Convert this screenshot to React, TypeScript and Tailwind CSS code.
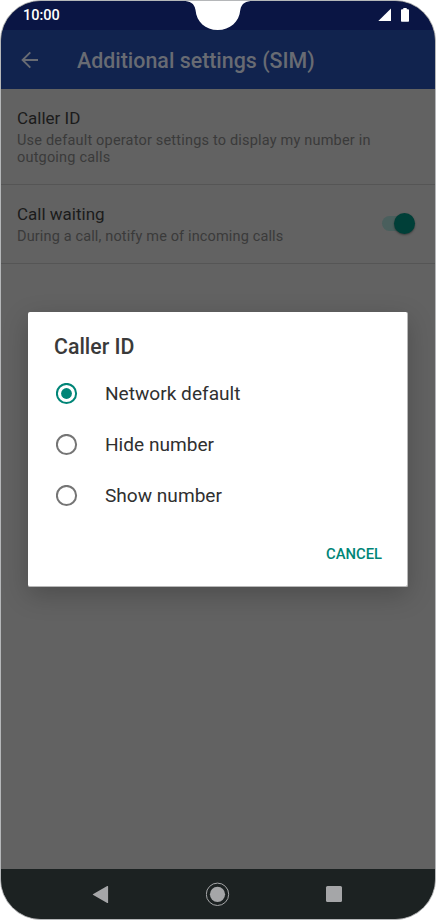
import { useState } from "react";

const options = ["Network default", "Hide number", "Show number"];

const StatusBar = () => (
  <div className="relative h-[29px] bg-[#0a1544] flex justify-between pl-[22px] pr-[26px]">
    <span className="text-[14.5px] leading-[30px] font-medium text-white">10:00</span>
    <div className="flex items-start gap-[10px] pt-[7px]">
      <svg width="13" height="14" viewBox="0 0 13 14" fill="#fff">
        <path d="M13 0.5V13H0.3z" />
      </svg>
      <svg width="8" height="14" viewBox="0 0 8 14" fill="#fff">
        <path d="M2.3 0h3.4v1.3H7a1 1 0 0 1 1 1V13a.8.8 0 0 1-.8.8H.8A.8.8 0 0 1 0 13V2.3a1 1 0 0 1 1-1h1.3z" />
      </svg>
    </div>
    {/* camera notch */}
    <svg className="absolute left-[182px] -top-px" width="70" height="31" viewBox="0 0 70 31" fill="#fff">
      <path d="M0 0H70V1C63 1 58.5 3 57.3 10C56.3 22 47 30 34.7 30S13.5 22 12.5 10C11.3 3 7 1 0 1z" />
    </svg>
  </div>
);

const NavBar = () => (
  <div className="h-[50px] bg-[#1c2222] flex items-center pl-[91px]">
    <svg width="18" height="18" viewBox="0 0 18 18" fill="#a5a6a8">
      <path d="M1.3 8.9 15.2 1.1q.9-.5.9.5v15.8q0 1-.9.5L1.3 10.1q-1-.6 0-1.2z" />
    </svg>
    <svg className="ml-[96px]" width="24" height="24" viewBox="0 0 24 24">
      <circle cx="11.5" cy="12.3" r="11.2" fill="none" stroke="#a5a6a8" strokeWidth="1" />
      <circle cx="11.5" cy="12.3" r="7.6" fill="#a5a6a8" />
    </svg>
    <div className="w-[16px] h-[16px] ml-[96px] rounded-[1.5px] bg-[#a5a6a8]" />
  </div>
);

const App = () => {
  const [selected, setSelected] = useState(options[0]);

  return (
    <div className="relative w-[436px] h-[920px] bg-white font-['Roboto',sans-serif]">
      <div className="w-full h-full rounded-[41px] border border-[#b5b7b9] overflow-hidden flex flex-col bg-[#626262]">
        <StatusBar />

        <header className="h-[59px] shrink-0 bg-[#11234e] flex items-center pl-[20px] text-[#686b73]">
          <svg width="18" height="18" viewBox="0 0 18 18" fill="none" stroke="currentColor" strokeWidth="1.9">
            <path d="M17 9H2M9.3 1.3 1.6 9l7.7 7.7" />
          </svg>
          <h1 className="ml-[38px] mt-[3px] text-[21.4px] font-medium whitespace-nowrap">Additional settings (SIM)</h1>
        </header>

        <main className="flex-1">
          <div className="h-[96px] border-b border-[#555] pl-[16px] pt-[18px]">
            <h2 className="text-[17px] leading-[22px] text-[#1b1b1b]">Caller ID</h2>
            <p className="mt-[3px] w-[370px] text-[14.5px] tracking-[0.19px] leading-[17px] text-[#3a3a3a]">
              Use default operator settings to display my number in outgoing calls
            </p>
          </div>
          <div className="h-[79px] border-b border-[#555] pl-[16px] pr-[20px] flex justify-between items-center">
            <div>
              <h2 className="text-[17px] leading-[22px] text-[#1b1b1b]">Call waiting</h2>
              <p className="mt-[3px] text-[14.5px] tracking-[0.14px] leading-[17px] text-[#3a3a3a]">During a call, notify me of incoming calls</p>
            </div>
            <div className="w-[33px] h-[15px] mb-[2px] rounded-full bg-[#4a5f5d] flex items-center justify-end">
              <span className="w-[21px] h-[21px] shrink-0 rounded-full bg-[#003f38] shadow-[0_1px_2px_rgba(0,0,0,0.4)]" />
            </div>
          </div>
        </main>

        <NavBar />
      </div>

      <div
        role="dialog"
        className="absolute left-[28px] top-[312px] w-[380px] h-[275px] rounded-[2px] bg-white border-r border-b border-[#b8b8b8] shadow-[0_8px_26px_rgba(0,0,0,0.22)] pl-[26px] pr-[25px] pt-[21px] flex flex-col"
      >
        <h2 className="text-[21.3px] leading-[28px] font-medium text-[#3a3a3a]">Caller ID</h2>
        <div className="mt-[7px]">
          {options.map(option => (
            <div key={option} onClick={() => setSelected(option)} className="h-[51px] flex items-center cursor-pointer">
              <svg className="ml-[2px]" width="22" height="22" viewBox="0 0 22 22">
                <circle cx="10.5" cy="10.5" r="9.6" fill="none" stroke={option === selected ? "#008577" : "#757575"} strokeWidth="2" />
                {option === selected && <circle cx="10.5" cy="10.5" r="5.4" fill="#008577" />}
              </svg>
              <span className="ml-[27px] mt-[2px] text-[19.1px] text-[#303030]">{option}</span>
            </div>
          ))}
        </div>
        <button className="self-end mt-[23px] text-[14.8px] leading-[20px] font-medium text-[#008577]">CANCEL</button>
      </div>
    </div>
  );
};

export default App;
